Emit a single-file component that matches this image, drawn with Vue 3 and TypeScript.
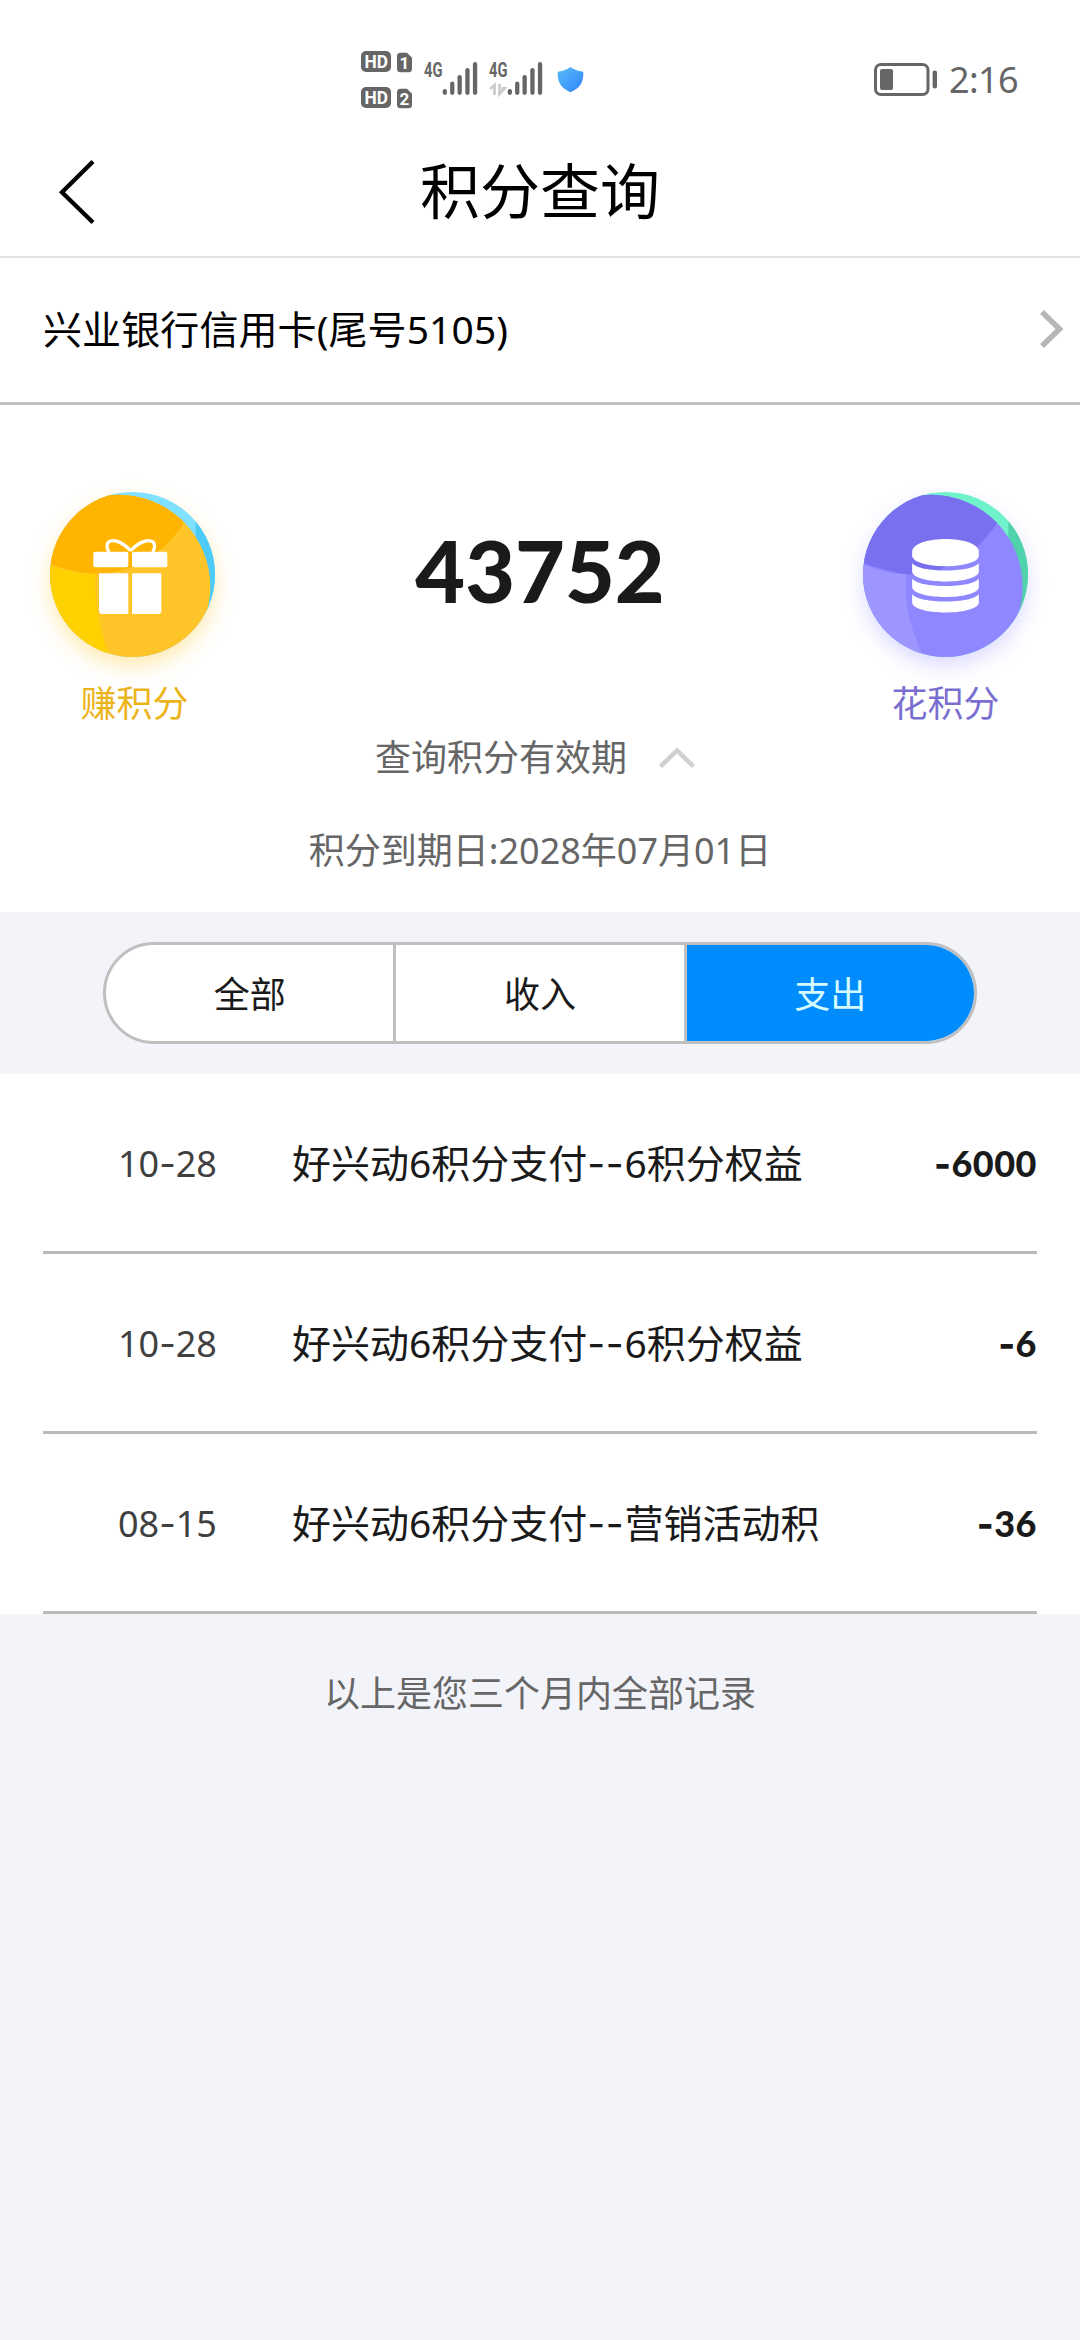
<script setup lang="ts">
interface PointRecord {
  date: string
  title: string
  amount: string
}

const tabs: string[] = ['全部', '收入', '支出']
const activeTab = '支出'

const records: PointRecord[] = [
  { date: '10-28', title: '好兴动6积分支付--6积分权益', amount: '-6000' },
  { date: '10-28', title: '好兴动6积分支付--6积分权益', amount: '-6' },
  { date: '08-15', title: '好兴动6积分支付--营销活动积', amount: '-36' },
]

// Hyphens are set in a wider face than the digits around them.
const runs = (text: string): string[] => text.split(/(-+)/).filter(Boolean)

const bars = [
  { x: 2, top: 27 },
  { x: 9.4, top: 19.5 },
  { x: 16.8, top: 13 },
  { x: 24.6, top: 6 },
  { x: 32.2, top: 0 },
]
</script>

<template>
  <div class="page">
    <div class="status">
      <svg class="status-left" width="240" height="60" viewBox="355 50 240 60">
        <g v-for="n in 2" :key="n" :transform="`translate(0 ${(n - 1) * 36})`">
          <rect x="361" y="51" width="30" height="21" rx="5" fill="#666" />
          <text x="364.5" y="68.2" class="badge" font-size="18.5" textLength="23.5" lengthAdjust="spacingAndGlyphs">HD</text>
          <path d="M400.500 52.800h6.500l5 5v11a3.500 3.500 0 0 1-3.500 3.500h-8a3.500 3.500 0 0 1-3.500-3.500v-12.500a3.500 3.500 0 0 1 3.500-3.500z" fill="#666" />
          <text x="404.300" y="69.200" class="badge" font-size="17" text-anchor="middle">{{ n }}</text>
        </g>
        <g v-for="n in 2" :key="'s' + n" :transform="`translate(${(n - 1) * 65} 0)`">
          <text x="424" y="77" class="net" font-size="20" textLength="18.500" lengthAdjust="spacingAndGlyphs">4G</text>
          <rect v-for="b in bars" :key="b.x" :x="440.700 + b.x" :y="62 + b.top" width="4.300" :height="33 - b.top" rx="2.150" fill="#666" />
        </g>
        <path d="M490 89l4.500-4V95M499.500 84v10l5-5.500h-3" fill="none" stroke="#ccc" stroke-width="2.800" />
        <defs>
          <linearGradient id="shield" x1="0" y1="0" x2="1" y2="1">
            <stop offset="0" stop-color="#59baf8" />
            <stop offset="1" stop-color="#2f86fa" />
          </linearGradient>
        </defs>
        <path d="M570.500 67c3.500 2.500 7.500 4 11.500 4.500 1 0 1.300.5 1.300 1.500.2 9-3 15-12.800 19.200C560.700 88 557.500 82 557.700 73c0-1 .3-1.500 1.300-1.500 4-.5 8-2 11.500-4.500z" fill="url(#shield)" />
      </svg>
      <div class="status-right">
        <svg width="64" height="34" viewBox="874 63 64 34">
          <rect x="875.500" y="64.500" width="52.500" height="30" rx="5.500" fill="none" stroke="#666" stroke-width="3" />
          <rect x="880" y="69" width="13" height="21" rx="2" fill="#666" />
          <rect x="932.600" y="70.500" width="4.400" height="18" rx="2" fill="#666" />
        </svg>
        <span class="clock">2:16</span>
      </div>
    </div>

    <header class="header">
      <svg class="back" width="40" height="66" viewBox="0 0 40 66">
        <path d="M35 2.500L4 33.200l31 30.300" fill="none" stroke="#000" stroke-width="4.300" />
      </svg>
      <h1>积分查询</h1>
    </header>

    <div class="card">
      <span>兴业银行信用卡(尾号5105)</span>
      <svg width="26" height="40" viewBox="0 0 26 40">
        <path d="M3 3l17.500 17L3 37" fill="none" stroke="#b6b6b6" stroke-width="5.500" />
      </svg>
    </div>

    <section class="points">
      <div class="summary">
        <div class="entry earn">
          <svg width="165" height="165" viewBox="60 66 495 495">
            <defs>
              <clipPath id="earnClip"><circle cx="307.500" cy="313.500" r="247.500" /></clipPath>
              <clipPath id="earnFace"><circle cx="265" cy="350" r="276" /></clipPath>
            </defs>
            <g clip-path="url(#earnClip)">
              <rect x="60" y="66" width="495" height="495" fill="#7fe0ff" />
              <path d="M497 140V420h70V140z" fill="#4ccbf8" />
              <g clip-path="url(#earnFace)">
                <rect x="-20" y="60" width="600" height="520" fill="#fec428" />
                <path d="M40 275Q115 312 197 311Q190 430 242 570H40z" fill="#ffd100" />
                <path d="M40 60H500L455 170Q350 311 195 311Q120 308 40 275z" fill="#ffb400" />
              </g>
            </g>
            <g fill="#fff">
              <rect x="190" y="245" width="105" height="47" rx="6" />
              <rect x="306" y="245" width="106" height="47" rx="6" />
              <path d="M207 310h88v122h-78q-10 0-10-10zM306 310h88v112q0 10-10 10h-78z" />
            </g>
            <path d="M302 242C270 209 243 207 234 218Q227 230 237 246M302 242C334 209 362 207 371 218Q378 230 368 246" fill="none" stroke="#fff" stroke-width="10" />
          </svg>
          <span>赚积分</span>
        </div>

        <strong class="total">43752</strong>

        <div class="entry spend">
          <svg width="165" height="165" viewBox="69 66 495 495">
            <defs>
              <clipPath id="spendClip"><circle cx="316.500" cy="313.500" r="247.500" /></clipPath>
              <clipPath id="spendFace"><circle cx="272" cy="350" r="276" /></clipPath>
            </defs>
            <g clip-path="url(#spendClip)">
              <rect x="69" y="66" width="495" height="495" fill="#70f3ca" />
              <path d="M505 140V420h70V140z" fill="#50d2ac" />
              <g clip-path="url(#spendFace)">
                <rect x="-20" y="60" width="620" height="520" fill="#8e87ff" />
                <path d="M40 268Q120 312 200 313Q184 430 256 570H40z" fill="#9d96ff" />
                <path d="M40 60H520L468 165Q450 190 415 227L300 300Q250 315 200 313Q130 303 40 268z" fill="#7970f0" />
              </g>
            </g>
            <path d="M216.500 243C224 195 409 195 416.500 243V259C407 299 226 299 216.500 259z" fill="#fff" />
            <path v-for="y in [279, 325.500, 372]" :key="y" :d="`M216.500 ${y}C235 ${y + 30} 398 ${y + 30} 416.500 ${y}v27C407 ${y + 65} 226 ${y + 65} 216.500 ${y + 27}z`" fill="#fff" />
          </svg>
          <span>花积分</span>
        </div>
      </div>

      <div class="expand">
        <span>查询积分有效期</span>
        <svg width="36" height="22" viewBox="0 0 36 22">
          <path d="M1.500 19.500L18 3.500l16.500 16" fill="none" stroke="#d0d0d0" stroke-width="4.500" />
        </svg>
      </div>
      <p class="expiry">积分到期日:2028年07月01日</p>
    </section>

    <nav class="filter">
      <div class="tabs">
        <div v-for="t in tabs" :key="t" class="tab" :class="{ active: t === activeTab }">{{ t }}</div>
      </div>
    </nav>

    <div class="list">
      <div v-for="(r, i) in records" :key="i" class="row">
        <span class="date"><span v-for="(p, k) in runs(r.date)" :key="k" :class="{ dash: p[0] === '-' }">{{ p }}</span></span>
        <span class="title"><span v-for="(p, k) in runs(r.title)" :key="k" :class="{ dash: p[0] === '-' }">{{ p }}</span></span>
        <span class="amount"><span v-for="(p, k) in runs(r.amount)" :key="k" :class="{ dash: p[0] === '-' }">{{ p }}</span></span>
      </div>
    </div>
    <p class="end">以上是您三个月内全部记录</p>
  </div>
</template>

<style>
body {
  background: #f3f4fa;
}
</style>

<style scoped>
.page {
  width: 1080px;
  min-height: 2340px;
  background: #f3f4fa;
  font-family: "Noto Sans", "Noto Sans CJK SC", sans-serif;
  font-size: 36px;
  line-height: 52px;
  color: #1a1a1a;
}
svg {
  display: block;
  flex: none;
  overflow: visible;
}
h1,
p {
  margin: 0;
}
.status {
  display: flex;
  justify-content: space-between;
  height: 128px;
  padding: 0 60px 0 355px;
  box-sizing: border-box;
  background: #fff;
}
.status-left {
  margin-top: 50px;
}
.badge {
  font-family: Roboto, sans-serif;
  font-weight: 700;
  fill: #fff;
}
.net {
  font-family: Roboto, sans-serif;
  font-weight: 700;
  fill: #666;
}
.status-right {
  display: flex;
  align-items: center;
  height: 34px;
  margin-top: 63px;
  gap: 11px;
  color: #666;
}
.clock {
  font-size: 36px;
  letter-spacing: -0.6px;
  line-height: 34px;
  width: 71px;
  white-space: nowrap;
}
.header {
  display: flex;
  align-items: center;
  height: 130px;
  padding: 0 58px;
  box-sizing: border-box;
  border-bottom: 2px solid #e4e4e4;
  background: #fff;
}
.back {
  margin-right: -40px;
}
h1 {
  flex: 1;
  text-align: center;
  font-size: 60px;
  line-height: 80px;
  padding-bottom: 2px;
  font-weight: 400;
  color: #000;
}
.card {
  display: flex;
  align-items: center;
  justify-content: space-between;
  height: 147px;
  padding: 0 15px 2px 43px;
  box-sizing: border-box;
  border-bottom: 3px solid #bfbfbf;
  background: #fff;
  font-size: 39px;
  letter-spacing: 0.1px;
  color: #000;
}
.points {
  height: 507px;
  background: #fff;
  overflow: hidden;
}
.summary {
  display: flex;
  justify-content: space-between;
  height: 240px;
  padding: 87px 52px 0 50px;
}
.entry {
  display: flex;
  flex-direction: column;
  align-items: center;
  gap: 21px;
  width: 165px;
}
.entry svg {
  border-radius: 50%;
}
.earn {
  color: #ecb41c;
}
.earn span {
  padding-left: 4px;
}
.earn svg {
  box-shadow: 0 9px 20px rgba(255, 196, 40, 0.36);
}
.spend {
  color: #7a6fd0;
}
.spend svg {
  box-shadow: 0 9px 20px rgba(142, 135, 255, 0.3);
}
.total {
  font-family: Lato, sans-serif;
  font-weight: 900;
  font-size: 86px;
  line-height: 100px;
  margin-top: 28px;
  padding-left: 2px;
}
.expand {
  display: flex;
  align-items: center;
  gap: 32px;
  padding-left: 375px;
  height: 52px;
  color: #666;
}
.expiry {
  margin-top: 41px;
  text-align: center;
  color: #666;
}
.filter {
  display: flex;
  height: 162px;
  padding: 30px 103px;
  box-sizing: border-box;
}
.tabs {
  display: flex;
  flex: 1;
  border: 3px solid #bfbfbf;
  border-radius: 51px;
  overflow: hidden;
  background: #fff;
}
.tab {
  flex: 1;
  text-align: center;
  line-height: 100px;
}
.tab + .tab {
  border-left: 3px solid #bfbfbf;
}
.tab.active {
  background: #008cfc;
  color: #d5fbff;
}
.list {
  padding: 0 43px;
  background: #fff;
}
.row {
  display: flex;
  align-items: center;
  height: 180px;
  padding-top: 2px;
  box-sizing: border-box;
  border-bottom: 3px solid #bababa;
}
.date {
  width: 175px;
  padding-left: 75px;
  color: #404040;
}
.title {
  flex: 1;
  margin-left: -1px;
  font-size: 39px;
}
.title .dash {
  letter-spacing: 0.6px;
}
.amount {
  font-family: Lato, sans-serif;
  font-weight: 900;
  letter-spacing: 0.5px;
}
.dash {
  font-family: Inter, sans-serif;
}
.amount .dash {
  font-weight: 800;
}
.end {
  padding-top: 54px;
  text-align: center;
  color: #666;
}
</style>
